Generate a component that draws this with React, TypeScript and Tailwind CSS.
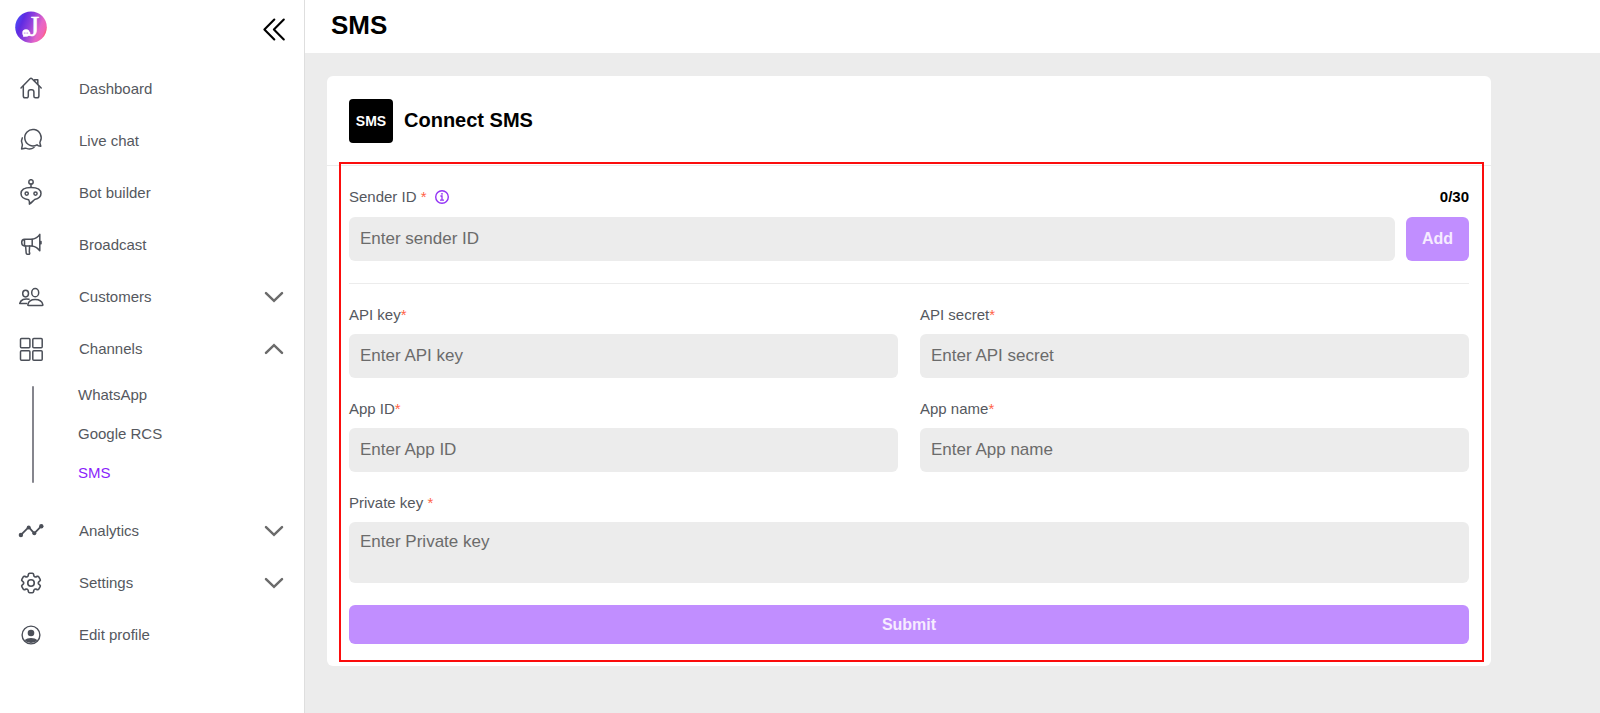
import { useState } from "react";
import type { ReactNode } from "react";
import { HiOutlineCog6Tooth } from "react-icons/hi2";
import clsx from "clsx";

interface NavItemProps {
  label: string;
  icon: ReactNode;
  chevron?: "up" | "down";
}

interface FieldProps {
  id: string;
  label: string;
  placeholder: string;
}

const channels = ["WhatsApp", "Google RCS", "SMS"];

const fields: FieldProps[] = [
  { id: "api-key", label: "API key", placeholder: "Enter API key" },
  { id: "api-secret", label: "API secret", placeholder: "Enter API secret" },
  { id: "app-id", label: "App ID", placeholder: "Enter App ID" },
  { id: "app-name", label: "App name", placeholder: "Enter App name" },
];

const inputClass =
  "rounded-md bg-[#ececec] px-[11px] text-[17px] text-[#333] placeholder:text-[#6b6b6b] outline-none";

function NavIcon({ children }: { children: ReactNode }) {
  return (
    <svg
      width="28"
      height="28"
      viewBox="0 0 28 28"
      fill="none"
      stroke="currentColor"
      strokeWidth="1.5"
      strokeLinecap="round"
      strokeLinejoin="round"
      className="shrink-0"
      aria-hidden="true"
    >
      {children}
    </svg>
  );
}

const HomeIcon = () => (
  <NavIcon>
    <path d="M4 13 13 3.800q1-1 2 0L24.200 13" />
    <path d="M17.600 6.200V4.700h3.200v4.800" />
    <path d="M6.300 11.200v9.800a1.800 1.800 0 0 0 1.800 1.800h1.700a1.500 1.500 0 0 0 1.500-1.500v-4.400a2.200 2.200 0 0 1 2.200-2.200h1.200a2.200 2.200 0 0 1 2.200 2.200v4.400a1.500 1.500 0 0 0 1.500 1.500h1.700a1.800 1.800 0 0 0 1.800-1.800V11.200" />
  </NavIcon>
);

const ChatIcon = () => (
  <NavIcon>
    <path d="M20 17.800a8.200 8.200 0 1 1 3.200-3.300q-.6 1.100-.1 2.200l.7 2.600-2.400-.6q-.7-.2-1.400-.9Z" />
    <path d="M5.300 10.800q-1.600 3.100-.1 6.200.3.700.1 1.400l-.7 3.600 3.500-.7q.7-.1 1.300.1 4.200 1.500 7.600-.9" />
  </NavIcon>
);

const BotIcon = () => (
  <NavIcon>
    <circle cx="14" cy="2.900" r="2.200" />
    <path d="M14 5.200v3" />
    <path d="M11.600 20.700C7 20.200 4 18 4 14.600c0-4 4-6.200 10-6.200s10 2.200 10 6.200c0 3-2.600 5.200-6.400 5.900-1.600 1.400-3.200 3.400-5.200 4.700q.4-2.700-.8-4.500Z" />
    <circle cx="9.700" cy="14.600" r="1.600" />
    <circle cx="18.500" cy="14.600" r="1.600" />
  </NavIcon>
);

const MegaphoneIcon = () => (
  <NavIcon>
    <path d="M7.500 8.300h7.700v6.600H7.500zM7.500 8.300c-2 0-2.800 1.200-2.800 3.300s.8 3.300 2.800 3.300" />
    <path d="M15.200 8.300c3.300-.6 5.900-2.400 7.600-4.900v16.400c-1.700-2.500-4.300-4.300-7.600-4.900M24 10.400v2.400" />
    <path d="m8.600 15 .6 7.200q.1 1 1.100 1h1.500q1 0 .9-1l-.4-1.500.3-5.700" />
  </NavIcon>
);

const PeopleIcon = () => (
  <NavIcon>
    <ellipse cx="8.600" cy="10.600" rx="2.900" ry="3.300" />
    <ellipse cx="18.200" cy="9.700" rx="3.500" ry="4.100" />
    <path d="M12 16.300c-4.300-1.200-8.400.4-9.300 4.200h7" />
    <path d="M10.800 21.800c.7-3.600 3.600-5.200 7.400-5.200s6.900 1.600 7.700 5.200q.1.700-.6.700H11.400q-.7 0-.6-.7Z" />
  </NavIcon>
);

const GridIcon = () => (
  <NavIcon>
    <rect x="3.500" y="3.400" width="9.400" height="9.400" rx="1" />
    <rect x="15.800" y="3.400" width="9.400" height="9.400" rx="1" />
    <rect x="3.500" y="15.800" width="9.400" height="9.400" rx="1" />
    <rect x="15.800" y="15.800" width="9.400" height="9.400" rx="1" />
  </NavIcon>
);

const AnalyticsIcon = () => (
  <NavIcon>
    <path d="m3.700 18.200 8-8 5.600 6.200 7-7.200" strokeWidth="1.800" />
    <g fill="currentColor" stroke="none">
      <circle cx="3.900" cy="18" r="2.200" />
      <circle cx="11.700" cy="10.400" r="2" />
      <circle cx="17.300" cy="16.300" r="2" />
      <circle cx="24.300" cy="9.300" r="2.200" />
    </g>
  </NavIcon>
);

const ProfileIcon = () => (
  <NavIcon>
    <circle cx="14" cy="14" r="8.900" strokeWidth="1.400" />
    <circle cx="14" cy="12" r="3.300" fill="currentColor" stroke="none" />
    <path
      d="M7.600 19.200c1.500-1.500 3.800-2.300 6.400-2.300s4.900.8 6.400 2.300a8.600 8.600 0 0 1-12.800 0Z"
      fill="currentColor"
      stroke="none"
    />
  </NavIcon>
);

function Logo() {
  return (
    <svg width="32" height="32" viewBox="0 0 32 32" role="img" aria-label="J">
      <defs>
        <linearGradient id="logo" x1="0" y1="0.3" x2="1" y2="0.7">
          <stop offset="0" stopColor="#4a4df8" />
          <stop offset="0.2" stopColor="#5f2be2" />
          <stop offset="0.45" stopColor="#9040dc" />
          <stop offset="0.75" stopColor="#e566c8" />
          <stop offset="0.9" stopColor="#f264b4" />
          <stop offset="1" stopColor="#ff5a4f" />
        </linearGradient>
      </defs>
      <circle cx="16" cy="16.200" r="15.800" fill="url(#logo)" />
      <text x="13" y="25" fill="#fff" stroke="#fff" strokeWidth="0.500" fontSize="29" fontFamily="Liberation Serif, serif">
        J
      </text>
      <circle cx="11" cy="22" r="3.700" fill="#fff" />
      <path d="m8.200 26.300.4-3 2.400 1.500Z" fill="#fff" />
      <g fill="#a04bd8">
        <circle cx="9.300" cy="22" r="0.500" />
        <circle cx="11" cy="22" r="0.500" />
        <circle cx="12.700" cy="22" r="0.500" />
      </g>
    </svg>
  );
}

function NavItem({ label, icon, chevron }: NavItemProps) {
  return (
    <a href="#" className="flex h-[52px] items-center pr-5 pl-[17px] text-[#4b4f58]">
      {icon}
      <span className="ml-[34px] flex-1 text-[15px] text-[#55585e]">{label}</span>
      {chevron && (
        <svg
          width="20"
          height="12"
          viewBox="0 0 20 12"
          fill="none"
          stroke="#6b6b6b"
          strokeWidth="2.500"
          strokeLinecap="round"
          className={clsx(chevron === "up" && "rotate-180")}
          aria-hidden="true"
        >
          <path d="m2 2.200 8 7.600 8-7.600" />
        </svg>
      )}
    </a>
  );
}

function Sidebar() {
  return (
    <aside className="w-[305px] shrink-0 border-r border-[#dedede] bg-white">
      <div className="flex h-[63px] items-start justify-between pt-[11px] pr-[18px] pl-[15px]">
        <Logo />
        <button type="button" aria-label="Collapse menu" className="pt-1.5">
          <svg
            width="24"
            height="24"
            viewBox="0 0 24 24"
            fill="none"
            stroke="#000"
            strokeWidth="2.100"
            strokeLinecap="round"
            strokeLinejoin="round"
          >
            <path d="M12.300 2.500 2.400 12.500l9.900 10M21.800 2.500l-9.900 10 9.900 10" />
          </svg>
        </button>
      </div>

      <nav>
        <NavItem label="Dashboard" icon={<HomeIcon />} />
        <NavItem label="Live chat" icon={<ChatIcon />} />
        <NavItem label="Bot builder" icon={<BotIcon />} />
        <NavItem label="Broadcast" icon={<MegaphoneIcon />} />
        <NavItem label="Customers" icon={<PeopleIcon />} chevron="down" />
        <NavItem label="Channels" icon={<GridIcon />} chevron="up" />

        {/* Channels submenu */}
        <div className="mt-px mb-3 flex pl-8">
          <div className="my-[10px] w-0.5 rounded-full bg-[#85858d]" />
          <div className="flex flex-col pl-11">
            {channels.map((channel) => (
              <a
                key={channel}
                href="#"
                className={clsx(
                  "flex h-[39px] items-center text-[15px]",
                  channel === "SMS" ? "text-[#8a1ffb]" : "text-[#55585e]"
                )}
              >
                {channel}
              </a>
            ))}
          </div>
        </div>

        <NavItem label="Analytics" icon={<AnalyticsIcon />} chevron="down" />
        <NavItem
          label="Settings"
          icon={<HiOutlineCog6Tooth size={26} className="mx-px shrink-0" />}
          chevron="down"
        />
        <NavItem label="Edit profile" icon={<ProfileIcon />} />
      </nav>
    </aside>
  );
}

function Required() {
  return <span className="text-[#ff6347]">*</span>;
}

function Field({ id, label, placeholder }: FieldProps) {
  return (
    <div className="flex flex-col gap-[10px]">
      <label htmlFor={id} className="text-[15px] leading-[18px] text-[#55585e]">
        {label}
        <Required />
      </label>
      <input id={id} type="text" placeholder={placeholder} className={clsx(inputClass, "h-11")} />
    </div>
  );
}

export default function App() {
  const [senderId, setSenderId] = useState("");

  return (
    <div className="flex min-h-screen bg-[#ececec] font-['Liberation_Sans',Arial,sans-serif]">
      <Sidebar />

      <main className="min-w-0 flex-1">
        <header className="bg-white pt-[9px] pb-3 pl-[26px]">
          <h1 className="text-[26px] leading-8 font-bold text-black">SMS</h1>
        </header>

        <div className="pt-[23px] pr-[109px] pb-[22px] pl-[22px]">
          <section className="relative rounded-md bg-white">
            <div className="flex items-center gap-[11px] border-b border-[#ececec] px-[22px] pt-[23px] pb-[22px]">
              <div className="flex h-11 w-11 items-center justify-center rounded bg-black text-sm font-bold text-white">
                SMS
              </div>
              <h2 className="pb-0.5 text-xl leading-6 font-bold text-black">Connect SMS</h2>
            </div>

            <form className="flex flex-col gap-[22px] p-[22px]" onSubmit={(e) => e.preventDefault()}>
              <div className="flex flex-col gap-[11px] border-b border-[#ececec] pb-[22px]">
                <div className="flex items-center justify-between text-[15px] leading-[18px]">
                  <div className="flex items-center gap-2">
                    <label htmlFor="sender-id" className="text-[#55585e]">
                      Sender ID <Required />
                    </label>
                    <svg width="14" height="14" viewBox="0 0 14 14" fill="none" stroke="#9333f5" aria-hidden="true">
                      <circle cx="7" cy="7" r="6.300" strokeWidth="1.400" />
                      <path d="M5.400 6H7v4M5 10.200h4" strokeWidth="1.300" />
                      <circle cx="7" cy="3.800" r="0.900" fill="#9333f5" stroke="none" />
                    </svg>
                  </div>
                  <span className="font-bold text-black">0/30</span>
                </div>
                <div className="flex gap-[11px]">
                  <input
                    id="sender-id"
                    type="text"
                    placeholder="Enter sender ID"
                    value={senderId}
                    onChange={(e) => setSenderId(e.target.value)}
                    className={clsx(inputClass, "h-11 min-w-0 flex-1")}
                  />
                  <button type="button" className="h-11 rounded-md bg-[#c18eff] px-4 text-base font-bold text-[#f6ecff]">
                    Add
                  </button>
                </div>
              </div>

              <div className="grid grid-cols-2 gap-[22px]">
                {fields.map((field) => (
                  <Field key={field.id} {...field} />
                ))}
              </div>

              <div className="flex flex-col gap-[10px]">
                <label htmlFor="private-key" className="text-[15px] leading-[18px] text-[#55585e]">
                  Private key <Required />
                </label>
                <textarea
                  id="private-key"
                  placeholder="Enter Private key"
                  className={clsx(inputClass, "h-[61px] resize-none py-2 leading-6")}
                />
              </div>

              <button type="submit" className="h-[39px] rounded-md bg-[#c18eff] text-base font-bold text-[#f6ecff]">
                Submit
              </button>
            </form>

            {/* Highlight frame around the form */}
            <div className="pointer-events-none absolute top-[86px] right-[7px] bottom-1 left-3 border-2 border-[#fb0d0d]" />
          </section>
        </div>
      </main>
    </div>
  );
}
